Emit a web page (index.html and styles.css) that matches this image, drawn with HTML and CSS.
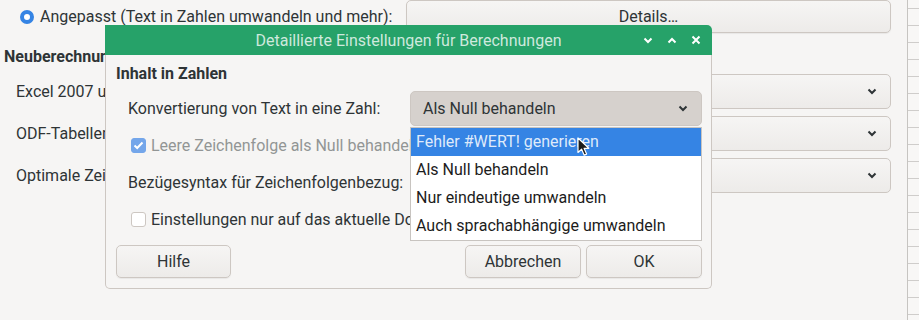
FILE: index.html
```html
<!DOCTYPE html>
<html lang="de">
<head>
  <meta charset="UTF-8" />
  <title>Detaillierte Einstellungen für Berechnungen</title>
  <link rel="stylesheet" href="styles.css">
</head>
<body>
  <div class="page">
    <div class="main">
      <div class="row first">
        <label class="radio-label"><span class="radio"></span>Angepasst (Text in Zahlen umwandeln und mehr):</label>
        <button class="btn">Details…</button>
      </div>
      <div class="heading">Neuberechnung beim Laden der Datei</div>
      <div class="row">
        <span class="lbl">Excel 2007 und neuer:</span>
        <div class="combo"><span></span><svg class="chev" width="10" height="7" viewBox="0 0 10 7"><path d="M1.5 1.5 L5 5 L8.5 1.5" fill="none" stroke="#2e3436" stroke-width="2"/></svg></div>
      </div>
      <div class="row">
        <span class="lbl">ODF-Tabellendokument (nicht mit LibreOffice gespeichert):</span>
        <div class="combo"><span></span><svg class="chev" width="10" height="7" viewBox="0 0 10 7"><path d="M1.5 1.5 L5 5 L8.5 1.5" fill="none" stroke="#2e3436" stroke-width="2"/></svg></div>
      </div>
      <div class="row">
        <span class="lbl">Optimale Zeilenhöhe neu berechnen:</span>
        <div class="combo"><span></span><svg class="chev" width="10" height="7" viewBox="0 0 10 7"><path d="M1.5 1.5 L5 5 L8.5 1.5" fill="none" stroke="#2e3436" stroke-width="2"/></svg></div>
      </div>
    </div>
    <div class="sheet"></div>
  </div>

  <div class="dialog">
    <div class="titlebar">
      <span class="title">Detaillierte Einstellungen für Berechnungen</span>
      <div class="controls">
        <svg width="10" height="7" viewBox="0 0 10 7"><path d="M1.5 1.5 L5 5 L8.5 1.5" fill="none" stroke="#fff" stroke-width="2"/></svg>
        <svg width="10" height="7" viewBox="0 0 10 7"><path d="M1.5 5.5 L5 2 L8.5 5.5" fill="none" stroke="#fff" stroke-width="2"/></svg>
        <svg width="10" height="10" viewBox="0 0 10 10"><path d="M1.5 1.5 L8.5 8.5 M8.5 1.5 L1.5 8.5" fill="none" stroke="#fff" stroke-width="2"/></svg>
      </div>
    </div>
    <div class="dlg-body">
      <div class="section">Inhalt in Zahlen</div>
      <div class="form">
        <span class="lbl">Konvertierung von Text in eine Zahl:</span>
        <div class="combo active"><span>Als Null behandeln</span><svg class="chev" width="10" height="7" viewBox="0 0 10 7"><path d="M1.5 1.5 L5 5 L8.5 1.5" fill="none" stroke="#2e3436" stroke-width="2"/></svg></div>

        <label class="check disabled"><span class="box checked"><svg width="11" height="9" viewBox="0 0 11 9"><path d="M1.5 4.5 L4.2 7 L9.5 1.5" fill="none" stroke="#fff" stroke-width="2"/></svg></span><span class="clip">Leere Zeichenfolge als Null behandeln</span></label>

        <span class="lbl">Bezügesyntax für Zeichenfolgenbezug:</span>
        <div class="combo"><span></span></div>

        <label class="check"><span class="box"></span><span class="clip">Einstellungen nur auf das aktuelle Dokument anwenden</span></label>
      </div>
      <div class="buttons">
        <button class="btn help">Hilfe</button>
        <span class="spacer"></span>
        <button class="btn">Abbrechen</button>
        <button class="btn">OK</button>
      </div>
    </div>

    <ul class="popup">
      <li class="selected">Fehler #WERT! generieren</li>
      <li>Als Null behandeln</li>
      <li>Nur eindeutige umwandeln</li>
      <li>Auch sprachabhängige umwandeln</li>
    </ul>

    <svg class="cursor" width="13" height="20" viewBox="0 0 13 20">
      <path d="M1 1 L1 15.5 L4.6 12.2 L7.2 18.2 L9.6 17.1 L7.1 11.3 L11.8 11.3 Z" fill="#1c1c1c" stroke="#fff" stroke-width="1.2" stroke-linejoin="round"/>
    </svg>
  </div>
</body>
</html>
```

FILE: styles.css
```css
* { box-sizing: border-box; }
html, body {
  margin: 0;
  padding: 0;
  width: 919px;
  height: 320px;
  overflow: hidden;
  background: #f6f5f4;
  font-family: Roboto, "Noto Sans", sans-serif;
  font-size: 16px;
  color: #2e3436;
}
.page {
  display: flex;
  height: 320px;
}
.main {
  width: 907px;
  display: flex;
  flex-direction: column;
  gap: 7px;
}
.row {
  display: grid;
  grid-template-columns: 406px 485px;
  height: 35px;
  align-items: center;
}
.row.first { height: 33px; }
.lbl {
  white-space: nowrap;
  overflow: hidden;
}
.row .lbl { padding-left: 16px; }
.radio-label {
  display: flex;
  align-items: center;
  gap: 6px;
  padding-left: 20px;
  white-space: nowrap;
}
.radio {
  width: 14px;
  height: 14px;
  border-radius: 50%;
  border: 4px solid #3584e4;
  background: #fff;
}
.heading {
  font-weight: bold;
  line-height: 20px;
  padding-left: 4px;
  margin-top: 7px;
  white-space: nowrap;
}
.btn {
  font: inherit;
  color: #2e3436;
  height: 33px;
  border: 1px solid #cdc7c2;
  border-radius: 5px;
  background: linear-gradient(#f6f5f4, #edebe9);
  box-shadow: 0 1px 1px rgba(0, 0, 0, 0.06);
  padding: 0 10px;
}
.combo {
  height: 35px;
  display: flex;
  align-items: center;
  justify-content: space-between;
  padding: 0 12px;
  border: 1px solid #cdc7c2;
  border-radius: 5px;
  background: linear-gradient(#f6f5f4, #edebe9);
  white-space: nowrap;
}
.combo.active {
  background: #d6d1cd;
  border-color: #cdc7c2;
}
.combo .chev { margin-right: 1px; }
.sheet {
  flex: 1;
  border-left: 1px solid #c6c4c1;
  background-color: #f8f7f6;
  background-image: repeating-linear-gradient(to bottom, transparent 0, transparent 8px, #cfcdcb 8px, #cfcdcb 9px, transparent 9px, transparent 17px);
}

/* dialog */
.dialog {
  position: absolute;
  left: 105px;
  top: 25px;
  width: 607px;
  height: 264px;
  display: flex;
  flex-direction: column;
}
.titlebar {
  height: 30px;
  background: #26a269;
  border-radius: 0 5px 0 0;
  position: relative;
  display: flex;
  align-items: center;
  justify-content: center;
}
.title {
  color: rgba(255, 255, 255, 0.78);
  white-space: nowrap;
}
.controls {
  position: absolute;
  right: 11px;
  top: 0;
  height: 30px;
  display: flex;
  align-items: center;
  gap: 14px;
}
.dlg-body {
  flex: 1;
  border: 1px solid #cdc7c2;
  border-top: none;
  border-radius: 0 0 5px 5px;
  background: #f6f5f4;
  padding: 9px 9px 10px 10px;
  display: flex;
  flex-direction: column;
}
.section {
  font-weight: bold;
  line-height: 20px;
}
.form {
  margin: 6px 0 0 12px;
  display: grid;
  grid-template-columns: 282px 292px;
  grid-auto-rows: 37px;
  align-items: center;
}
.check {
  grid-column: 1 / 3;
  display: flex;
  align-items: center;
  gap: 5px;
  padding-left: 3px;
  white-space: nowrap;
}
.check .clip {
  width: 259px;
  overflow: hidden;
}
.check.disabled { color: #929595; }
.box {
  flex: none;
  width: 15px;
  height: 15px;
  border: 1px solid #cdc7c2;
  border-radius: 3px;
  background: #fff;
  display: flex;
  align-items: center;
  justify-content: center;
}
.box.checked {
  background: #74a6ea;
  border-color: #74a6ea;
}
.buttons {
  margin-top: 7px;
  display: flex;
  gap: 5px;
}
.buttons .btn { width: 116px; }
.buttons .btn.help { width: 115px; }
.spacer { flex: 1; }

/* open dropdown list */
.popup {
  position: absolute;
  left: 305px;
  top: 102px;
  width: 292px;
  margin: 0;
  padding: 0;
  list-style: none;
  background: #fff;
  border: 1px solid #c8c4c0;
  color: #1c1c1c;
}
.popup li {
  height: 28px;
  line-height: 28px;
  padding-left: 5px;
  white-space: nowrap;
}
.popup li.selected {
  background: #3584e4;
  color: rgba(255, 255, 255, 0.85);
}
.cursor {
  position: absolute;
  left: 472px;
  top: 112px;
}
```
